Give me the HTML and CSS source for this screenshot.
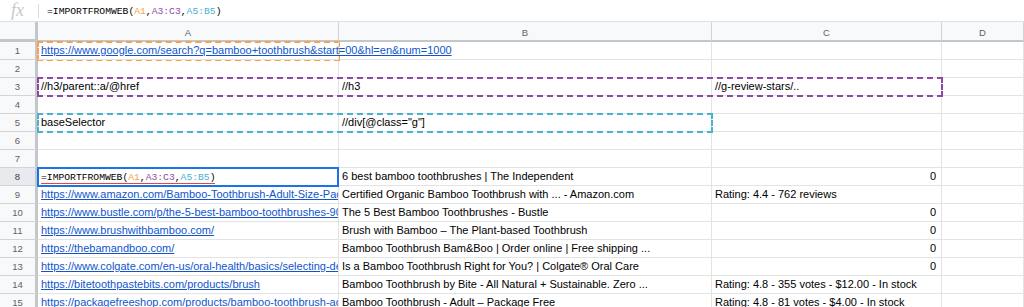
FILE: index.html
```html
<!DOCTYPE html>
<html>
	<head>
		<meta charset="UTF-8">
		<title>Sheet</title>
		<link rel="stylesheet" href="styles.css">
	</head>
	<body>
		<div class="fbar">
			<span class="fx">fx</span>
			<span class="sep"></span>
			<span class="formula">=IMPORTFROMWEB(<span class="r1">A1</span>,<span class="r2">A3:C3</span>,<span class="r3">A5:B5</span>)</span>
		</div>
		<div class="sheet">
			<div class="corner"></div>
			<div class="colhead">A</div>
			<div class="colhead">B</div>
			<div class="colhead">C</div>
			<div class="colhead">D</div>

			<div class="rowhead">1</div>
			<div class="cell spill"><a href="#">https://www.google.com/search?q=bamboo+toothbrush&amp;start=00&amp;hl=en&amp;num=1000</a></div>
			<div class="cell"></div><div class="cell"></div><div class="cell"></div>

			<div class="rowhead">2</div>
			<div class="cell"></div><div class="cell"></div><div class="cell"></div><div class="cell"></div>

			<div class="rowhead">3</div>
			<div class="cell">//h3/parent::a/@href</div>
			<div class="cell">//h3</div>
			<div class="cell">//g-review-stars/..</div>
			<div class="cell"></div>

			<div class="rowhead">4</div>
			<div class="cell"></div><div class="cell"></div><div class="cell"></div><div class="cell"></div>

			<div class="rowhead">5</div>
			<div class="cell">baseSelector</div>
			<div class="cell">//div[@class="g"]</div>
			<div class="cell"></div><div class="cell"></div>

			<div class="rowhead">6</div>
			<div class="cell"></div><div class="cell"></div><div class="cell"></div><div class="cell"></div>

			<div class="rowhead">7</div>
			<div class="cell"></div><div class="cell"></div><div class="cell"></div><div class="cell"></div>

			<div class="rowhead active">8</div>
			<div class="cell editing"><span class="formula">=IMPORTFROMWEB(<span class="r1">A1</span>,<span class="r2">A3:C3</span>,<span class="r3">A5:B5</span>)</span></div>
			<div class="cell">6 best bamboo toothbrushes | The Independent</div>
			<div class="cell num">0</div>
			<div class="cell"></div>

			<div class="rowhead">9</div>
			<div class="cell"><a href="#">https://www.amazon.com/Bamboo-Toothbrush-Adult-Size-Pack</a></div>
			<div class="cell">Certified Organic Bamboo Toothbrush with ... - Amazon.com</div>
			<div class="cell">Rating: 4.4 - 762 reviews</div>
			<div class="cell"></div>

			<div class="rowhead">10</div>
			<div class="cell"><a href="#">https://www.bustle.com/p/the-5-best-bamboo-toothbrushes-90</a></div>
			<div class="cell">The 5 Best Bamboo Toothbrushes - Bustle</div>
			<div class="cell num">0</div>
			<div class="cell"></div>

			<div class="rowhead">11</div>
			<div class="cell"><a href="#">https://www.brushwithbamboo.com/</a></div>
			<div class="cell">Brush with Bamboo – The Plant-based Toothbrush</div>
			<div class="cell num">0</div>
			<div class="cell"></div>

			<div class="rowhead">12</div>
			<div class="cell"><a href="#">https://thebamandboo.com/</a></div>
			<div class="cell">Bamboo Toothbrush Bam&amp;Boo | Order online | Free shipping ...</div>
			<div class="cell num">0</div>
			<div class="cell"></div>

			<div class="rowhead">13</div>
			<div class="cell"><a href="#">https://www.colgate.com/en-us/oral-health/basics/selecting-de</a></div>
			<div class="cell">Is a Bamboo Toothbrush Right for You? | Colgate® Oral Care</div>
			<div class="cell num">0</div>
			<div class="cell"></div>

			<div class="rowhead">14</div>
			<div class="cell"><a href="#">https://bitetoothpastebits.com/products/brush</a></div>
			<div class="cell">Bamboo Toothbrush by Bite - All Natural + Sustainable. Zero ...</div>
			<div class="cell">Rating: 4.8 - 355 votes - $12.00 - In stock</div>
			<div class="cell"></div>

			<div class="rowhead">15</div>
			<div class="cell"><a href="#">https://packagefreeshop.com/products/bamboo-toothbrush-ad</a></div>
			<div class="cell">Bamboo Toothbrush - Adult – Package Free</div>
			<div class="cell">Rating: 4.8 - 81 votes - $4.00 - In stock</div>
			<div class="cell"></div>

			<div class="range range-a1"></div>
			<div class="range range-a3"></div>
			<div class="range range-a5"></div>
		</div>
	</body>
</html>
```

FILE: styles.css
```css
*{
	margin:0;
	padding:0;
	box-sizing:border-box;
}
html,body{
	width:1024px;
	height:307px;
	overflow:hidden;
	background:#fff;
}
body{
	font-family:"Liberation Sans",Arial,sans-serif;
	font-size:11px;
	color:#000;
}
.fbar{
	height:22px;
	display:flex;
	align-items:center;
	border-bottom:1px solid #e1e1e1;
}
.fx{
	width:38px;
	padding-left:11px;
	font-family:"Liberation Serif",serif;
	font-style:italic;
	font-size:18px;
	color:#c8c8c8;
}
.sep{
	width:1px;
	height:14px;
	background:#dadada;
	margin-right:8px;
}
.formula{
	font-family:"Liberation Mono",monospace;
	font-size:9.7px;
	color:#000;
}
.fbar .formula{
	padding-top:1px;
}
.r1{ color:#f5a24a; }
.r2{ color:#8e49a8; }
.r3{ color:#46b3d2; }

.sheet{
	position:relative;
	display:grid;
	grid-template-columns:38px 301px 373px 230px 82px;
	grid-template-rows:20px repeat(15,18px);
}
.corner{
	background:#f8f9fa;
	border-right:3px solid #c4c7ca;
	border-bottom:3px solid #c4c7ca;
}
.colhead{
	background:#f8f9fa;
	border-right:1px solid #d2d4d6;
	border-bottom:2px solid #c4c7ca;
	color:#5f6368;
	font-size:9.5px;
	display:flex;
	align-items:center;
	justify-content:center;
	padding-top:3px;
}
.rowhead{
	background:#f8f9fa;
	border-right:3px solid #c4c7ca;
	border-bottom:1px solid #d2d4d6;
	color:#5f6368;
	font-size:9.5px;
	display:flex;
	align-items:center;
	justify-content:center;
}
.rowhead.active{
	background:#e8eaed;
	color:#3c4043;
}
.cell{
	border-right:1px solid #e2e3e3;
	border-bottom:1px solid #e2e3e3;
	padding:0 3px;
	white-space:nowrap;
	overflow:hidden;
	line-height:17px;
}
.cell.spill{
	overflow:visible;
	position:relative;
	z-index:1;
}
.cell a{
	color:#1155cc;
	text-decoration:underline;
}
.cell.num{
	text-align:right;
	padding-right:5px;
}
.cell.editing{
	position:relative;
	z-index:2;
	border:2px solid #1a73e8;
	margin:-1px 0 -1px -1px;
	padding-left:2px;
	line-height:15px;
	background:#fff;
}
.cell.editing .formula{
	border-bottom:1px solid #e8453c;
}

.range{
	position:absolute;
	border:2px dashed;
	pointer-events:none;
}
.range-a1{
	border-color:#f5a24a;
	left:37px;
	top:19px;
	width:303px;
	height:20px;
}
.range-a3{
	border-color:#8e49a8;
	left:37px;
	top:55px;
	width:906px;
	height:20px;
}
.range-a5{
	border-color:#46b3d2;
	left:37px;
	top:91px;
	width:676px;
	height:20px;
}
```
